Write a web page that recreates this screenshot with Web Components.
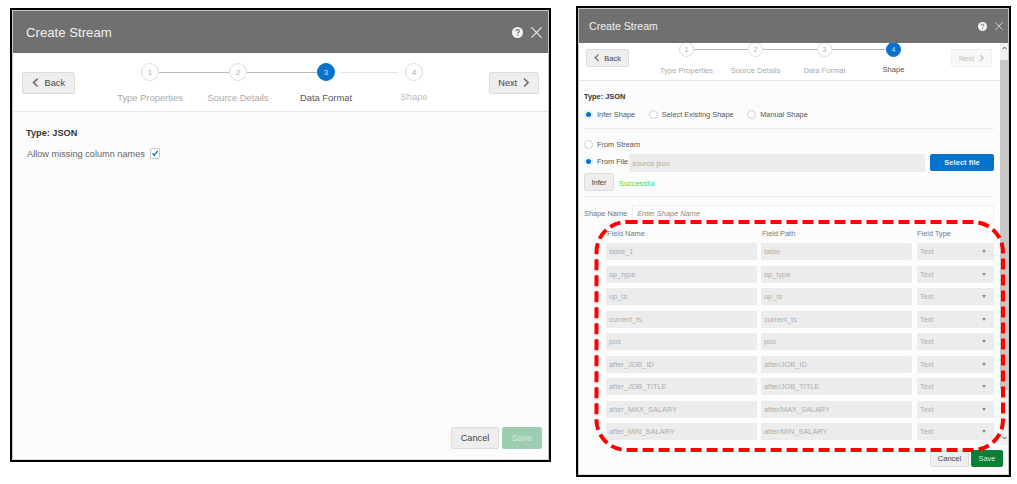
<!DOCTYPE html>
<html lang="en">
<head>
<meta charset="utf-8">
<title>Create Stream</title>
<style>
  html, body { margin: 0; height: 100%; background: #fff; }
  body { font-family: "Liberation Sans", Arial, sans-serif; overflow: hidden; }
</style>
</head>
<body>
<cs-page>
  <cs-dialog title="Create Stream" style="--w:541px;--h:454px;--top:8px;--left:10px;--head:42px;--title-size:13.2px;--title-pad:13px;--title-up:0px;--text:9.2px;--help:11px;--close:11px;--icons-gap:8px;--icons-pad:6px;--foot:32px;--foot-gap:3px;">
    <cs-wizard style="--wiz-h:58px;--pad-l:9px;--pad-r:9px;--btn-top:19px;--step-w:88px;--steps-top:10px;--circle:18px;--label-size:9.4px;--label-gap:11px;--btn-h:22px;--btn-text:9.2px;">
      <cs-button slot="start" icon="back" style="--bw:53px">Back</cs-button>
      <cs-step first num="1" state="done" label="Type Properties"></cs-step>
      <cs-step num="2" state="done" label="Source Details"></cs-step>
      <cs-step num="3" state="current" label="Data Format"></cs-step>
      <cs-step last num="4" state="todo" label="Shape"></cs-step>
      <cs-button slot="end" icon="next" style="--bw:50px">Next</cs-button>
    </cs-wizard>
    <cs-format-form></cs-format-form>
    <cs-button slot="footer" style="--bw:48px;--btn-h:22px;--btn-text:9.2px">Cancel</cs-button>
    <cs-button slot="footer" variant="save-off" style="--bw:40px;--btn-h:22px;--btn-text:9.2px">Save</cs-button>
  </cs-dialog>

  <cs-dialog title="Create Stream" style="--w:435px;--h:471px;--top:6px;--left:25px;--head:34px;--title-size:10.6px;--title-pad:10px;--title-up:1px;--text:7.4px;--help:9px;--close:8px;--icons-gap:8px;--icons-pad:5px;--foot:29px;--foot-pad:5px;--foot-top:5px;--foot-gap:2px;">
    <cs-wizard style="--wiz-h:37px;--pad-l:7px;--pad-r:8px;--btn-top:6px;--step-w:69px;--steps-top:-1.5px;--circle:15px;--label-size:7.6px;--label-gap:9px;--btn-h:18px;--btn-text:7.5px;">
      <cs-button slot="start" icon="back" style="--bw:43px">Back</cs-button>
      <cs-step first num="1" state="done" label="Type Properties"></cs-step>
      <cs-step num="2" state="done" label="Source Details"></cs-step>
      <cs-step num="3" state="done" label="Data Format"></cs-step>
      <cs-step last num="4" state="current" label="Shape"></cs-step>
      <cs-button slot="end" icon="next" variant="off" style="--bw:41px">Next</cs-button>
    </cs-wizard>
    <cs-shape-form></cs-shape-form>
    <cs-scrollbar slot="scroll"></cs-scrollbar>
    <cs-button slot="footer" style="--bw:39px;--btn-h:17px;--btn-text:7.5px">Cancel</cs-button>
    <cs-button slot="footer" variant="save" style="--bw:32px;--btn-h:17px;--btn-text:7.5px">Save</cs-button>
    <svg slot="overlay" width="433" height="469" viewBox="0 0 433 469" fill="none">
      <rect x="18.5" y="214" width="406.5" height="228" rx="30" stroke="#f00" stroke-width="4" stroke-dasharray="11 5"/>
    </svg>
  </cs-dialog>
</cs-page>

<script>
// ----- Page -----
class CsPage extends HTMLElement {
  constructor() {
    super();
    this.attachShadow({ mode: "open" }).innerHTML = `
      <style>
        :host { display: flex; align-items: flex-start; width: 1017px; height: 484px; }
      </style>
      <slot></slot>
    `;
  }
}

// ----- Dialog -----
class CsDialog extends HTMLElement {
  constructor() {
    super();
    const title = this.getAttribute("title");
    this.removeAttribute("title");
    this.attachShadow({ mode: "open" }).innerHTML = `
      <style>
        :host {
          display: flex;
          flex: none;
          box-sizing: border-box;
          position: relative;
          width: var(--w);
          height: var(--h);
          margin: var(--top) 0 0 var(--left);
          border: 2px solid #000;
          font-family: "Liberation Sans", Arial, sans-serif;
          font-size: var(--text);
          color: #555;
        }
        .frame {
          flex: 1;
          min-width: 0;
          display: flex;
          flex-direction: column;
          border: 1px solid #c9c9c9;
          border-bottom-color: #ddd;
          background: #fcfcfc;
        }
        header {
          flex: none;
          height: var(--head);
          display: flex;
          align-items: center;
          justify-content: space-between;
          padding: 0 var(--icons-pad) 0 var(--title-pad);
          background: #707070;
          color: #f0f0f0;
          font-size: var(--title-size);
        }
        header > span:first-child { margin-bottom: var(--title-up); }
        .icons { display: flex; align-items: center; gap: var(--icons-gap); }
        .help { width: var(--help); height: var(--help); display: block; }
        .close { width: var(--close); height: var(--close); display: block; }
        .main { flex: 1; min-height: 0; display: flex; }
        .content { flex: 1; min-width: 0; display: flex; flex-direction: column; overflow: hidden; }
        footer {
          flex: none;
          height: var(--foot);
          box-sizing: border-box;
          display: flex;
          align-items: flex-start;
          justify-content: flex-end;
          gap: var(--foot-gap);
          padding: var(--foot-top, 0px) var(--foot-pad, 6px) 0;
        }
        .over { position: absolute; left: 0; top: 0; pointer-events: none; }
      </style>
      <div class="frame">
        <header>
          <span>${title}</span>
          <span class="icons">
            <svg class="help" viewBox="0 0 12 12">
              <circle cx="6" cy="6" r="6" fill="#f4f4f4"/>
              <path d="M4.2 4.7c0-1.100.8-1.800 1.900-1.800s1.800.7 1.800 1.600c0 1.300-1.700 1.300-1.700 2.700" fill="none" stroke="#707070" stroke-width="1.300"/>
              <rect x="5.500" y="8.200" width="1.400" height="1.400" fill="#707070"/>
            </svg>
            <svg class="close" viewBox="0 0 12 12"><path d="M.5.500l11 11M11.500.500l-11 11" stroke="#f4f4f4" stroke-width="1.100"/></svg>
          </span>
        </header>
        <div class="main">
          <div class="content"><slot></slot></div>
          <slot name="scroll"></slot>
        </div>
        <footer><slot name="footer"></slot></footer>
      </div>
      <div class="over"><slot name="overlay"></slot></div>
    `;
  }
}

// ----- Wizard bar -----
class CsWizard extends HTMLElement {
  constructor() {
    super();
    this.attachShadow({ mode: "open" }).innerHTML = `
      <style>
        :host {
          display: flex;
          flex: none;
          align-items: flex-start;
          height: var(--wiz-h);
          padding: 0 var(--pad-r) 0 var(--pad-l);
          background: #fff;
          border-bottom: 1px solid #e3e8ea;
        }
        .steps {
          flex: 1;
          display: flex;
          justify-content: center;
          margin-top: var(--steps-top);
        }
        ::slotted(cs-button) { margin-top: var(--btn-top); }
      </style>
      <slot name="start"></slot>
      <div class="steps"><slot></slot></div>
      <slot name="end"></slot>
    `;
  }
}

class CsStep extends HTMLElement {
  constructor() {
    super();
    this.attachShadow({ mode: "open" }).innerHTML = `
      <style>
        :host {
          display: flex;
          flex-direction: column;
          align-items: center;
          width: var(--step-w);
          color: #a9a9a9;
          font-size: var(--label-size);
        }
        .head { display: flex; align-items: center; width: 100%; height: var(--circle); }
        .line {
          flex: none;
          box-sizing: border-box;
          width: calc((var(--step-w) - var(--circle)) / 2);
          height: 1px;
          background: #b8b8b8;
        }
        .circle {
          box-sizing: border-box;
          flex: none;
          width: var(--circle);
          height: var(--circle);
          border: 1.5px solid #ddd;
          border-radius: 50%;
          background: #fff;
          color: #aaa;
          font-size: calc(var(--label-size) * .85);
          display: flex;
          align-items: center;
          justify-content: center;
        }
        .label { margin-top: var(--label-gap); white-space: nowrap; line-height: 1.2; }
        :host([first]) .before, :host([last]) .after { visibility: hidden; }
        :host([last]) .label { margin-top: calc(var(--label-gap) - 1px); }
        :host([state="current"]) { color: #555; }
        :host([state="current"]) .circle { background: #0572ce; border-color: #0572ce; color: #cfe3f5; }
        :host([state="current"]) .after { border-left: 6px solid #fff; background: #e4e4e4; }
        :host([state="todo"]) { color: #bcbcbc; }
        :host([state="todo"]) .before { border-right: 7px solid #fff; background: #e4e4e4; }
      </style>
      <div class="head">
        <span class="line before"></span>
        <span class="circle">${this.getAttribute("num")}</span>
        <span class="line after"></span>
      </div>
      <div class="label">${this.getAttribute("label")}</div>
    `;
  }
}

// ----- Button -----
const CHEVRONS = {
  back: '<svg viewBox="0 0 7 10" class="chev"><path d="M6 .8L1.500 5 6 9.200" fill="none" stroke="currentColor" stroke-width="1.600"/></svg>',
  next: '<svg viewBox="0 0 7 10" class="chev"><path d="M1 .8L5.500 5 1 9.200" fill="none" stroke="currentColor" stroke-width="1.600"/></svg>'
};

class CsButton extends HTMLElement {
  constructor() {
    super();
    const icon = this.getAttribute("icon");
    this.attachShadow({ mode: "open" }).innerHTML = `
      <style>
        :host {
          display: inline-flex;
          flex: none;
          align-items: center;
          justify-content: center;
          gap: calc(var(--btn-text) * .65);
          box-sizing: border-box;
          width: var(--bw);
          height: var(--btn-h);
          background: #eeeeee;
          border: 1px solid #dcdcdc;
          border-radius: 2px;
          color: #444;
          font-size: var(--btn-text);
          white-space: nowrap;
        }
        .chev { width: calc(var(--btn-text) * .72); height: calc(var(--btn-text) * 1); color: #666; }
        :host([variant="off"]) { background: #f8f8f8; border-color: #efefef; color: #bcbcbc; }
        :host([variant="off"]) .chev { color: #c4c4c4; }
        :host([variant="save"]) { background: #0a7f37; border-color: #0a7f37; color: #d5ecdc; }
        :host([variant="save-off"]) { background: #9ccdb0; border-color: #9ccdb0; color: #d5ebdd; }
        :host([variant="primary"]) { background: #0572ce; border-color: #0572ce; color: #e6f1fa; font-weight: bold; }
      </style>
      ${icon === "back" ? CHEVRONS.back : ""}<slot></slot>${icon === "next" ? CHEVRONS.next : ""}
    `;
  }
}

// ----- Form parts -----
class CsRadio extends HTMLElement {
  constructor() {
    super();
    this.attachShadow({ mode: "open" }).innerHTML = `
      <style>
        :host { display: inline-flex; align-items: center; gap: 4px; white-space: nowrap; color: #555; }
        .dot {
          box-sizing: border-box;
          flex: none;
          width: 9px;
          height: 9px;
          border: 1px solid #d0d0d0;
          border-radius: 50%;
          background: #fff;
          display: flex;
          align-items: center;
          justify-content: center;
        }
        :host([checked]) .dot::after { content: ""; width: 5px; height: 5px; border-radius: 50%; background: #0572ce; }
        :host([checked]) .dot { border-color: #dde6ee; }
      </style>
      <span class="dot"></span><slot></slot>
    `;
  }
}

class CsField extends HTMLElement {
  constructor() {
    super();
    this.attachShadow({ mode: "open" }).innerHTML = `
      <style>
        :host {
          display: flex;
          align-items: center;
          box-sizing: border-box;
          min-width: 0;
          height: var(--fh, 17px);
          padding: 0 3px;
          background: #ececec;
          border-radius: 1px;
          color: #adadad;
          white-space: nowrap;
        }
        .arrow {
          margin-left: auto;
          margin-right: 5px;
          width: 0;
          height: 0;
          border: 2.5px solid transparent;
          border-top: 3px solid #8c8c8c;
          border-bottom: 0;
        }
      </style>
      <slot></slot>${this.hasAttribute("select") ? '<span class="arrow"></span>' : ""}
    `;
  }
}

class CsScrollbar extends HTMLElement {
  constructor() {
    super();
    this.attachShadow({ mode: "open" }).innerHTML = `
      <style>
        :host {
          display: flex;
          flex: none;
          flex-direction: column;
          align-items: center;
          width: 8px;
          background: #f1f1f1;
        }
        .btn { flex: none; height: 17px; box-sizing: border-box; padding-top: 3px; display: flex; justify-content: center; }
        .thumb { flex: none; width: 100%; height: 330px; background: #c8c8c8; }
        svg { width: 5px; height: 4px; }
        .down { margin-top: auto; height: 9px; padding-top: 0; }
      </style>
      <div class="btn"><svg viewBox="0 0 5 4"><path d="M.5 3.200L2.500 1l2 2.200" fill="none" stroke="#555" stroke-width="1"/></svg></div>
      <div class="thumb"></div>
      <div class="btn down"><svg viewBox="0 0 5 4"><path d="M.5.800L2.500 3l2-2.200" fill="none" stroke="#555" stroke-width="1"/></svg></div>
    `;
  }
}

// ----- Data Format step -----
class CsFormatForm extends HTMLElement {
  constructor() {
    super();
    this.attachShadow({ mode: "open" }).innerHTML = `
      <style>
        :host { display: block; padding: 15px 13px; }
        .type { font-weight: bold; color: #333; line-height: 12px; }
        .allow { display: flex; align-items: center; gap: 5px; margin-top: 9px; height: 11px; margin-left: 1px; color: #666; }
        .check {
          box-sizing: border-box;
          width: 10.5px;
          height: 10.5px;
          border: 1px solid #c4c9cd;
          border-radius: 2px;
          background: #fff;
          display: block;
        }
      </style>
      <div class="type">Type: JSON</div>
      <div class="allow">
        <span>Allow missing column names</span>
        <svg class="check" viewBox="0 0 11 11"><path d="M2 5.500l2.300 2.500L8.700 2.500" fill="none" stroke="#0572ce" stroke-width="1.600"/></svg>
      </div>
    `;
  }
}

// ----- Shape step -----
const FIELDS = [
  ["table_1", "table"],
  ["op_type", "op_type"],
  ["op_ts", "op_ts"],
  ["current_ts", "current_ts"],
  ["pos", "pos"],
  ["after_JOB_ID", "after/JOB_ID"],
  ["after_JOB_TITLE", "after/JOB_TITLE"],
  ["after_MAX_SALARY", "after/MAX_SALARY"],
  ["after_MIN_SALARY", "after/MIN_SALARY"]
];

class CsShapeForm extends HTMLElement {
  constructor() {
    super();
    const rows = FIELDS.map(f => `
      <cs-field>${f[0]}</cs-field>
      <cs-field>${f[1]}</cs-field>
      <cs-field select>Text</cs-field>
    `).join("");
    this.attachShadow({ mode: "open" }).innerHTML = `
      <style>
        :host { display: block; padding: 11px 6px 0 5px; }
        .type { font-weight: bold; color: #333; line-height: 10px; }
        .row { display: flex; align-items: center; }
        .kinds { gap: 13.5px; margin-top: 7px; height: 11px; }
        hr { border: 0; border-top: 1px solid #ececec; margin: 0; }
        .kinds + hr { margin-top: 8px; }
        .stream { margin-top: 10px; height: 11px; }
        .file { margin-top: 4px; height: 18px; }
        .file cs-radio { margin-bottom: 3px; }
        .file cs-field { flex: 1; margin-left: 1px; --fh: 18px; }
        .file cs-button { margin-left: 5px; align-self: flex-start; }
        .infer { gap: 5px; margin-top: 1px; height: 18px; }
        .ok { color: #3bdc3b; margin-top: 2px; }
        .infer + hr { margin-top: 5px; }
        .name { margin-top: 7.5px; height: 18px; gap: 5px; color: #777; }
        .input {
          flex: 1;
          box-sizing: border-box;
          height: 18px;
          display: flex;
          align-items: center;
          padding-left: 4px;
          background: #fff;
          border: 1px solid #eee;
          color: #888;
          font-style: italic;
        }
        .table {
          display: grid;
          grid-template-columns: 151px 151px 78px;
          grid-template-rows: 10.5px repeat(9, 17px);
          column-gap: 4px;
          row-gap: 5.5px;
          margin-left: 22px;
          padding-top: 4.5px;
          font-size: 7.4px;
        }
        .table > :nth-child(3n) { margin-left: 1px; }
        .table > span { display: flex; align-items: center; color: #777; height: 13px; }
        .table > span:nth-child(-n+2) { padding-left: 1px; }
      </style>
      <div class="type">Type: JSON</div>
      <div class="row kinds">
        <cs-radio checked>Infer Shape</cs-radio>
        <cs-radio>Select Existing Shape</cs-radio>
        <cs-radio>Manual Shape</cs-radio>
      </div>
      <hr>
      <div class="row stream"><cs-radio>From Stream</cs-radio></div>
      <div class="row file">
        <cs-radio checked>From File</cs-radio>
        <cs-field>source.json</cs-field>
        <cs-button variant="primary" style="--bw:64px;--btn-h:17px;--btn-text:7.6px">Select file</cs-button>
      </div>
      <div class="row infer">
        <cs-button style="--bw:30px;--btn-h:18px;--btn-text:7.6px">Infer</cs-button>
        <span class="ok">Successful</span>
      </div>
      <hr>
      <div class="row name"><span>Shape Name</span><div class="input">Enter Shape Name</div></div>
      <div class="table">
        <span>Field Name</span><span>Field Path</span><span>Field Type</span>
        ${rows}
      </div>
    `;
  }
}

customElements.define("cs-page", CsPage);
customElements.define("cs-dialog", CsDialog);
customElements.define("cs-wizard", CsWizard);
customElements.define("cs-step", CsStep);
customElements.define("cs-button", CsButton);
customElements.define("cs-radio", CsRadio);
customElements.define("cs-field", CsField);
customElements.define("cs-scrollbar", CsScrollbar);
customElements.define("cs-format-form", CsFormatForm);
customElements.define("cs-shape-form", CsShapeForm);
</script>
</body>
</html>
